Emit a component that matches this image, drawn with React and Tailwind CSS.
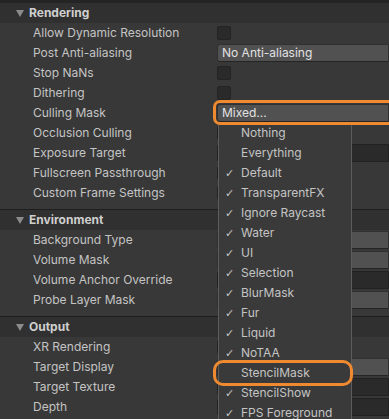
import React from "react";

const sections = [
  {
    title: "Rendering",
    rows: [
      { label: "Allow Dynamic Resolution", kind: "check" },
      { label: "Post Anti-aliasing", kind: "popup", value: "No Anti-aliasing" },
      { label: "Stop NaNs", kind: "check" },
      { label: "Dithering", kind: "check" },
      { label: "Culling Mask", kind: "popup", value: "Mixed..." },
      { label: "Occlusion Culling", kind: "check" },
      { label: "Exposure Target", kind: "field" },
      { label: "Fullscreen Passthrough", kind: "check" },
      { label: "Custom Frame Settings", kind: "check" },
    ],
  },
  {
    title: "Environment",
    rows: [
      // values sit under the open layer popup, so they're left blank
      { label: "Background Type", kind: "popup", value: "" },
      { label: "Volume Mask", kind: "popup", value: "" },
      { label: "Volume Anchor Override", kind: "field" },
      { label: "Probe Layer Mask", kind: "popup", value: "" },
    ],
  },
  {
    title: "Output",
    rows: [
      { label: "XR Rendering", kind: "check" },
      { label: "Target Display", kind: "popup", value: "" },
      { label: "Target Texture", kind: "field" },
      { label: "Depth", kind: "field" },
    ],
  },
];

const layers = [
  { name: "Nothing", on: false },
  { name: "Everything", on: false },
  { name: "Default", on: true },
  { name: "TransparentFX", on: true },
  { name: "Ignore Raycast", on: true },
  { name: "Water", on: true },
  { name: "UI", on: true },
  { name: "Selection", on: true },
  { name: "BlurMask", on: true },
  { name: "Fur", on: true },
  { name: "Liquid", on: true },
  { name: "NoTAA", on: true },
  { name: "StencilMask", on: false },
  { name: "StencilShow", on: true },
  { name: "FPS Foreground", on: true },
];

function Value({ row }) {
  if (row.kind === "check") {
    return <div className="h-[14px] w-[14px] rounded-[2px] border border-[#232323] bg-[#2a2a2a]" />;
  }
  if (row.kind === "popup") {
    return (
      <div className="flex h-[18px] flex-1 items-center rounded-l-[3px] border border-[#303030] border-b-[#242424] bg-[#515151] pl-[4px] text-[#e2e2e2]">
        {row.value}
      </div>
    );
  }
  return <div className="h-[18px] flex-1 rounded-l-[3px] border border-[#212121] bg-[#2a2a2a]" />;
}

function Section({ section, first }) {
  return (
    <section className={first ? "pb-[6px]" : "border-t border-[#1e1e1e] pb-[6px]"}>
      <div className="flex h-[20px] items-center bg-[#303030]">
        <svg width="8" height="7" viewBox="0 0 8 7" className="ml-[16px] mr-[5px]">
          <path d="M0 0 H8 L4 7 Z" fill="#8b8b8b" />
        </svg>
        <span className="font-bold text-[#cfcfcf]">{section.title}</span>
      </div>
      {section.rows.map((row) => (
        <div key={row.label} className="flex h-[20px] items-center">
          <span className="w-[217px] shrink-0 pl-[33px] text-[#c4c4c4]">{row.label}</span>
          <Value row={row} />
        </div>
      ))}
    </section>
  );
}

export default function App() {
  return (
    <div
      className="relative h-[419px] w-[389px] overflow-hidden bg-[#383838] text-[12px] leading-none"
      style={{ fontFamily: "Inter, 'Noto Sans', sans-serif" }}
    >
      <div className="h-[3px] bg-[#242424]" />
      {sections.map((s, i) => (
        <Section key={s.title} section={s} first={i === 0} />
      ))}

      {/* layer mask popup */}
      <div className="absolute left-[218px] top-[123px] w-[134px] border-x border-[#5c5c5c] bg-[#3a3a3a]">
        {layers.map((l) => (
          <div key={l.name} className="flex h-[20px] items-center text-[#c4c4c4]">
            <span
              className="w-[22px] pl-[6px] text-[11px]"
              style={{ fontFamily: "'DejaVu Sans', sans-serif" }}
            >
              {l.on ? "✓" : ""}
            </span>
            <span>{l.name}</span>
          </div>
        ))}
      </div>

      {/* annotations */}
      <div className="absolute left-[213px] top-[100px] h-[25px] w-[200px] rounded-[7px] border-[3px] border-[#ef8a31]" />
      <div className="absolute left-[213px] top-[360px] h-[26px] w-[140px] rounded-[10px] border-[3px] border-[#ef8a31]" />
    </div>
  );
}
